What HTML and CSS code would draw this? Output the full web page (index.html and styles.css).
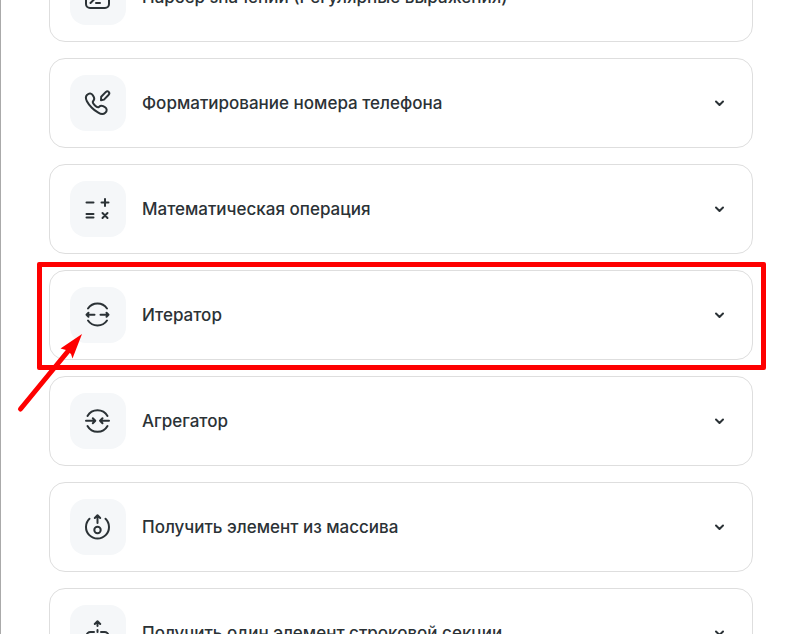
FILE: index.html
```html
<!DOCTYPE html>
<html lang="ru">

<head>
  <meta charset="UTF-8">
  <meta name="viewport" content="width=device-width, initial-scale=1.0">
  <title>Инструменты</title>
  <link rel="stylesheet" href="styles.css">
</head>

<body>
  <main class="tools">
    <button class="tool" type="button" aria-expanded="false">
      <span class="tool-icon">
        <svg viewBox="0 0 32 32"><rect x="4" y="5" width="23" height="22" rx="4"/><path d="M8.5 15l3.500 3.500-3.500 3.500M14 22h4"/></svg>
      </span>
      <span class="tool-name">Парсер значений (Регулярные выражения)</span>
      <svg class="chevron" viewBox="0 0 16 16"><path d="M4 6.500l3.500 3.500L11 6.500"/></svg>
    </button>

    <button class="tool" type="button" aria-expanded="false">
      <span class="tool-icon">
        <svg viewBox="0 0 32 32"><path d="M5.200 7.800C7 5.800 9.500 6 10.800 8.200l1 1.800c.8 1.500.4 3-.7 4.200-.8 1 .2 2.700 1.600 4.100s3.200 2.500 4.200 1.600c1.200-1.100 2.700-1.500 4.200-.7l1.800 1c2.200 1.300 2.400 3.800.4 5.600-2 1.900-4.300 1.600-7-.1-2.300-1.300-4.600-3-6.700-5.200-2-2-3.600-4.100-4.700-6.200-1.400-2.700-1.600-4.700.3-6.500z"/><path d="M19 13.300l.2-3.600 4.700-4.800c2-1.700 4.500.8 2.800 2.800L22 12.600z"/></svg>
      </span>
      <span class="tool-name">Форматирование номера телефона</span>
      <svg class="chevron" viewBox="0 0 16 16"><path d="M4 6.500l3.500 3.500L11 6.500"/></svg>
    </button>

    <button class="tool" type="button" aria-expanded="false">
      <span class="tool-icon">
        <svg viewBox="0 0 32 32"><path d="M4.500 9.500h7M19.500 9.500h7M23 6v7M4.500 21h7M4.500 24.500h7M20.500 20l5 5M25.500 20l-5 5"/></svg>
      </span>
      <span class="tool-name">Математическая операция</span>
      <svg class="chevron" viewBox="0 0 16 16"><path d="M4 6.500l3.500 3.500L11 6.500"/></svg>
    </button>

    <div class="marked">
      <button class="tool" type="button" aria-expanded="false">
        <span class="tool-icon">
          <svg viewBox="0 0 32 32"><path d="M6 9.500a11.500 11.500 0 0 1 19 0M6 21.500a11.500 11.500 0 0 0 19 0M12.500 15.700H4.500M6.500 13.700L4.500 15.700l2 2M18.500 15.700h8M24.500 13.700l2 2-2 2"/></svg>
        </span>
        <span class="tool-name">Итератор</span>
        <svg class="chevron" viewBox="0 0 16 16"><path d="M4 6.500l3.500 3.500L11 6.500"/></svg>
      </button>
      <div class="mark-frame"></div>
      <svg class="mark-arrow" viewBox="0 0 70 85"><path class="shaft" d="M5.500 80L54 21"/><path class="head" d="M67 5L45.500 19.500l5.500 1.500 5 4 1.500 4.500z"/></svg>
    </div>

    <button class="tool" type="button" aria-expanded="false">
      <span class="tool-icon">
        <svg viewBox="0 0 32 32"><path d="M5.500 11a11.500 11.500 0 0 1 20 0M5.500 21a11.500 11.500 0 0 0 20 0M4 15.700h9M10.800 13.200l2.500 2.500-2.500 2.500M27 15.700h-9M20.500 13.200L18 15.700l2.500 2.500"/></svg>
      </span>
      <span class="tool-name">Агрегатор</span>
      <svg class="chevron" viewBox="0 0 16 16"><path d="M4 6.500l3.500 3.500L11 6.500"/></svg>
    </button>

    <button class="tool" type="button" aria-expanded="false">
      <span class="tool-icon">
        <svg viewBox="0 0 32 32"><path d="M7.500 7.800a11.500 11.500 0 1 0 16 0M15.500 12V4.500M12.800 7l2.700-2.700L18.200 7"/><circle cx="15.500" cy="19" r="3.200"/></svg>
      </span>
      <span class="tool-name">Получить элемент из массива</span>
      <svg class="chevron" viewBox="0 0 16 16"><path d="M4 6.500l3.500 3.500L11 6.500"/></svg>
    </button>

    <button class="tool" type="button" aria-expanded="false">
      <span class="tool-icon">
        <svg viewBox="0 0 32 32"><path d="M15.500 9V4.500M12.800 7l2.700-2.700L18.200 7M15.500 13v2M12 15H8.500a4 4 0 0 0-4 4v5a4 4 0 0 0 4 4H12M19 15h3.500a4 4 0 0 1 4 4v5a4 4 0 0 1-4 4H19"/></svg>
      </span>
      <span class="tool-name">Получить один элемент строковой секции</span>
      <svg class="chevron" viewBox="0 0 16 16"><path d="M4 6.500l3.500 3.500L11 6.500"/></svg>
    </button>
  </main>
</body>

</html>
```

FILE: styles.css
```css
* {
  box-sizing: border-box;
}

body {
  margin: 0;
  height: 100vh;
  overflow: hidden;
  background-color: #fff;
  border-left: 1px solid #aaa;
  font-family: 'Inter', sans-serif;
  color: #2b3236;
}

/* the list is scrolled part of the way down */
.tools {
  display: flex;
  flex-direction: column;
  gap: 16px;
  margin-top: -48px;
  padding: 0 48px;
}

.tool {
  display: flex;
  align-items: center;
  gap: 16px;
  width: 100%;
  padding: 16px 24px 16px 20px;
  border: 1px solid #dedede;
  border-radius: 16px;
  background-color: #fff;
  color: inherit;
  font-family: inherit;
  font-size: 17px;
  font-weight: 500;
  line-height: 24px;
  text-align: left;
  cursor: pointer;
}

.tool-icon {
  display: flex;
  align-items: center;
  justify-content: center;
  flex: none;
  width: 56px;
  height: 56px;
  border-radius: 16px;
  background-color: #f5f7f9;
}

.tool svg {
  fill: none;
  stroke: currentColor;
  stroke-width: 2;
  stroke-linecap: round;
  stroke-linejoin: round;
}

.tool-icon svg {
  width: 32px;
  height: 32px;
}

.tool-name {
  flex: 1;
}

.tool .chevron {
  flex: none;
  width: 16px;
  height: 16px;
}

/* red frame and arrow over the highlighted tool */
.marked {
  position: relative;
}

.mark-frame {
  position: absolute;
  top: -8px;
  right: -13px;
  bottom: -10px;
  left: -12px;
  border: 5px solid #fe0000;
  border-radius: 2px;
  pointer-events: none;
}

.mark-arrow {
  position: absolute;
  top: 59px;
  left: -34px;
  width: 70px;
  height: 85px;
  z-index: 1;
  pointer-events: none;
}

.shaft {
  fill: none;
  stroke: #fe0000;
  stroke-width: 5;
  stroke-linecap: round;
}

.head {
  fill: #fe0000;
}
```
